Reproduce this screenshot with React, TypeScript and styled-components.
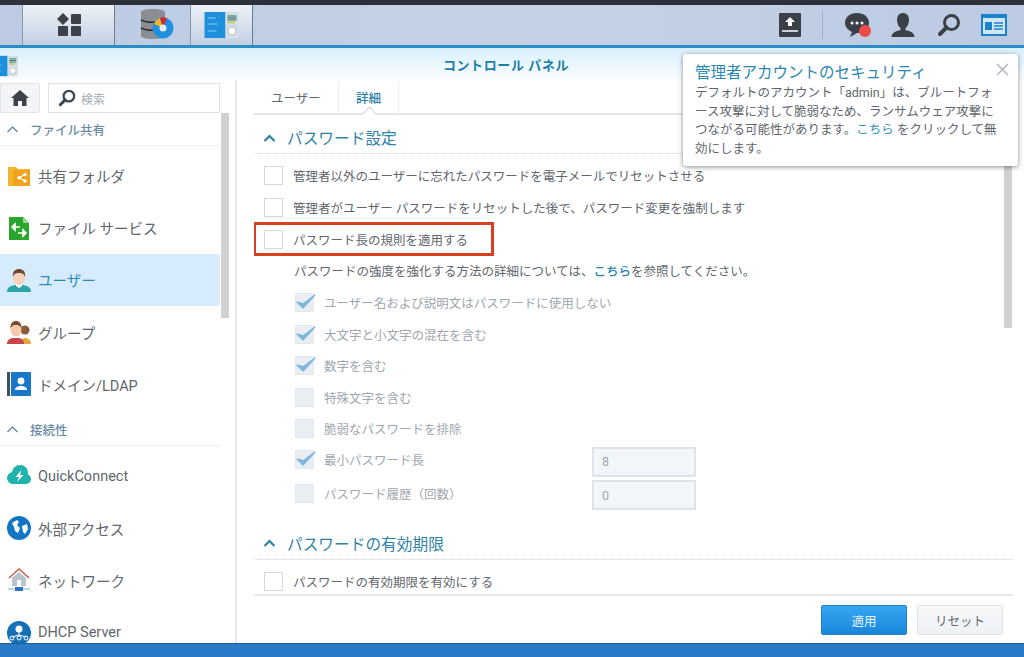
import React from "react"
import styled, { createGlobalStyle } from "styled-components"

const Global = createGlobalStyle`
  html, body { margin: 0; padding: 0; background: #fff; }
  body { font-family: Roboto, "Noto Sans CJK JP", sans-serif; color: #5f666c; }
  * { box-sizing: border-box; }
`

const Page = styled.div`
  width: 1024px;
  height: 657px;
  display: flex;
  flex-direction: column;
  overflow: hidden;
  position: relative;
`

// taskbar
const TopEdge = styled.div`
  height: 5px;
  background: #2c3038;
  flex: none;
`
const TaskBar = styled.div`
  height: 43px;
  flex: none;
  display: flex;
  align-items: stretch;
  background: linear-gradient(90deg, #bccbe3, #c5d2e6 50%, #bccbe3);
  border-bottom: 3px solid #2a8ec6;
`
const TaskButton = styled.div<{ $w: number; $active?: boolean; $pad?: number }>`
  width: ${(p) => p.$w}px;
  display: flex;
  align-items: center;
  justify-content: center;
  flex: none;
  padding-left: ${(p) => p.$pad ?? 0}px;
  ${(p) =>
    p.$active
      ? `background: linear-gradient(180deg, #eef2f7, #c3d0e4);
         border-left: 1px solid #8a97a8;
         border-right: 1px solid #6f7c8c;`
      : ""}
`
const TrayIcons = styled.div`
  margin-left: auto;
  display: flex;
  align-items: center;
  padding-right: 7px;
  height: 100%;
`
const TraySlot = styled.div<{ $w: number }>`
  width: ${(p) => p.$w}px;
  display: flex;
  justify-content: center;
  align-items: center;
`
const TrayDivider = styled.div`
  width: 1px;
  height: 28px;
  background: #a2afc2;
  margin: 0 12px 0 21px;
`

// window
const Window = styled.div`
  flex: 1;
  min-height: 0;
  display: flex;
  flex-direction: column;
  background: #fff;
`
const TitleBar = styled.div`
  height: 32px;
  flex: none;
  display: flex;
  align-items: center;
  justify-content: center;
  background: linear-gradient(180deg, #d9f0fd, #fbfdff);
  color: #1d7fa8;
  font-size: 13px;
  font-weight: 700;
  letter-spacing: 0.6px;
  position: relative;
  padding-right: 12px;
`
const TitleIcon = styled.div`
  position: absolute;
  left: -15px;
  top: 7px;
  line-height: 0;
`
const Body = styled.div`
  flex: 1;
  min-height: 0;
  display: grid;
  grid-template-columns: 237px 1fr;
  grid-template-rows: minmax(0, 1fr);
`
const BottomStrip = styled.div`
  height: 14px;
  flex: none;
  background: #2b79c9;
  border-top: 1px solid #1f5e92;
`

// sidebar
const Sidebar = styled.div`
  position: relative;
  overflow: hidden;
  border-right: 2px solid #e6e8eb;
  padding-top: 3px;
`
const SearchRow = styled.div`
  display: flex;
  gap: 8px;
  height: 30px;
  margin-right: 15px;
`
const HomeButton = styled.div`
  width: 40px;
  background: #f3f5f8;
  border: 1px solid #e1e5ea;
  border-radius: 0 3px 3px 0;
  display: flex;
  align-items: center;
  justify-content: center;
`
const SearchBox = styled.div`
  flex: 1;
  border: 1px solid #dfe3e7;
  display: flex;
  align-items: center;
  gap: 5px;
  padding-left: 9px;
  color: #a6adb3;
  font-size: 12px;
`
const GroupHeader = styled.div<{ $gap?: number }>`
  height: 33px;
  margin: ${(p) => p.$gap ?? 0}px 15px 0 0;
  display: flex;
  align-items: center;
  gap: 11px;
  padding-left: 6px;
  color: #6b8ba3;
  font-size: 12.5px;
  font-weight: 500;
  border-bottom: 1px solid #eef0f2;
`
const NavList = styled.div`
  margin: 3.5px 15px 0 0;
`
const NavItem = styled.div<{ $selected?: boolean }>`
  height: 52.2px;
  display: flex;
  align-items: center;
  gap: 7px;
  padding-left: 7px;
  font-size: 14.5px;
  border-radius: 0 3px 3px 0;
  color: ${(p) => (p.$selected ? "#2c88b8" : "#5f666c")};
  background: ${(p) => (p.$selected ? "#d6ebfb" : "transparent")};
`
const NavIconSlot = styled.span`
  width: 24px;
  height: 24px;
  flex: none;
  line-height: 0;
`
const SideThumb = styled.div`
  position: absolute;
  left: 221px;
  top: 33px;
  width: 8px;
  height: 205px;
  background: #cfd1d3;
`

// main column
const Main = styled.div`
  position: relative;
  display: flex;
  flex-direction: column;
  min-width: 0;
  min-height: 0;
`
const Tabs = styled.div`
  height: 33px;
  flex: none;
  margin: 2px 11px 0 17px;
  display: flex;
  border-bottom: 2px solid #e4e6e9;
`
const Tab = styled.div<{ $active?: boolean }>`
  width: ${(p) => (p.$active ? 60 : 85)}px;
  display: flex;
  align-items: center;
  justify-content: center;
  font-size: 12.5px;
  position: relative;
  color: ${(p) => (p.$active ? "#2c7fa6" : "#5f666c")};
  font-weight: ${(p) => (p.$active ? 500 : 400)};
  border-right: 1px solid #eceef0;
  ${(p) =>
    p.$active
      ? `&::after {
           content: "";
           position: absolute;
           left: 25px;
           bottom: -6px;
           width: 9px;
           height: 9px;
           background: #fff;
           border-left: 2px solid #e4e6e9;
           border-top: 2px solid #e4e6e9;
           transform: rotate(45deg);
         }`
      : ""}
`
const Content = styled.div`
  flex: 1;
  min-height: 0;
  overflow: hidden;
  margin: 0 11px 0 17px;
  border-bottom: 2px solid #e6e8eb;
`
const SectionHeader = styled.div<{ $gap?: number }>`
  height: 35px;
  margin-top: ${(p) => p.$gap ?? 4}px;
  display: flex;
  align-items: center;
  gap: 11px;
  padding: 3px 0 0 9px;
  color: #2f84a6;
  font-size: 15.7px;
  border-bottom: 1px dotted #d4d9dd;
`
const Row = styled.div<{ $h?: number }>`
  height: ${(p) => p.$h ?? 31.6}px;
  display: flex;
  align-items: center;
  gap: 10px;
  padding-left: 10px;
  font-size: 12.5px;
  color: #5f666c;
`
const FirstGap = styled.div`
  height: 6px;
`
const HighlightRow = styled(Row)`
  width: 241px;
  height: 34px;
  margin: -1px 0 -1px -1px;
  padding-left: 8px;
  border: 3px solid #d8401f;
`
const HintRow = styled(Row)`
  padding-left: 40px;
`
const SubRow = styled(Row)`
  padding-left: 41px;
  color: #a0a7ad;
`
const FieldRows = styled.div`
  margin-top: -2px;
`
const LabelFixed = styled.span`
  width: 258px;
  flex: none;
`
const Box = styled.span<{ $disabled?: boolean }>`
  width: 19px;
  height: 19px;
  flex: none;
  border: 1px solid ${(p) => (p.$disabled ? "#e3e9ee" : "#d6d9dc")};
  background: ${(p) => (p.$disabled ? "#e9eef3" : "#fff")};
  line-height: 0;
  position: relative;
`
const NumberField = styled.div`
  width: 104px;
  height: 30px;
  flex: none;
  margin-top: 4px;
  background: #f3f6f8;
  border: 2px solid #dfe4e8;
  display: flex;
  align-items: center;
  padding-left: 8px;
  font-size: 12.5px;
  color: #a0a7ad;
`
const Link = styled.span`
  color: #2a83ad;
  font-weight: 500;
`
const Footer = styled.div`
  height: 47px;
  flex: none;
  display: flex;
  justify-content: flex-end;
  align-items: flex-start;
  gap: 10px;
  padding: 9px 21px 0 0;
`
const Button = styled.div<{ $primary?: boolean }>`
  width: 86px;
  height: 30px;
  border-radius: 2px;
  display: flex;
  align-items: center;
  justify-content: center;
  font-size: 12.5px;
  color: ${(p) => (p.$primary ? "#e6f4ff" : "#5f6a72")};
  background: ${(p) =>
    p.$primary ? "linear-gradient(180deg,#35a6f2,#1b86d9)" : "linear-gradient(180deg,#f7f8fa,#eef1f5)"};
  border: 1px solid ${(p) => (p.$primary ? "#1f82c8" : "#dbe1e7")};
`
const MainThumb = styled.div`
  position: absolute;
  right: 12px;
  top: 33px;
  width: 8px;
  height: 215px;
  background: #cfd1d3;
`

// notification
const Popup = styled.div`
  position: absolute;
  left: 683px;
  top: 54px;
  width: 335px;
  height: 112px;
  background: #fff;
  border-radius: 3px;
  box-shadow: 0 1px 5px rgba(0, 0, 0, 0.45);
  padding: 9px 12px 8px 12px;
`
const PopupTitle = styled.div`
  color: #2b87ad;
  font-size: 15.5px;
  line-height: 20px;
  margin-bottom: 1px;
`
const PopupLine = styled.div`
  font-size: 12.5px;
  line-height: 18.5px;
  color: #5f666c;
  white-space: nowrap;
`
const PopupLink = styled(Link)`
  color: #3a90b4;
  font-weight: 400;
`
const PopupClose = styled.div`
  position: absolute;
  right: 9px;
  top: 9px;
  line-height: 0;
`

const Chevron = ({ color = "#6b8ba3", bold }: { color?: string; bold?: boolean }) => (
  <svg width="13" height="8" viewBox="0 0 13 8" fill="none">
    <path d="M1.5 7L6.5 2L11.5 7" stroke={color} strokeWidth={bold ? 2.2 : 1.4} />
  </svg>
)

const CheckMark = () => (
  <svg width="22" height="20" viewBox="0 0 22 20" style={{ position: "absolute", left: -1, top: -2 }}>
    <path d="M2 10L8 16L20 3L8.5 11.5Z" fill="#7fb6dc" stroke="#7fb6dc" strokeWidth="1.2" strokeLinejoin="round" />
  </svg>
)

const SearchGlyph = ({ size = 18, color = "#3f464d" }: { size?: number; color?: string }) => (
  <svg width={size} height={size} viewBox="0 0 24 24" fill="none">
    <circle cx="14.5" cy="9.5" r="7" stroke={color} strokeWidth="3" />
    <path d="M9.5 14.5L3 21" stroke={color} strokeWidth="4" strokeLinecap="round" />
  </svg>
)

const PanelIcon = ({ w = 35, h = 28 }: { w?: number; h?: number }) => (
  <svg width={w} height={h} viewBox="0 0 34 28">
    <rect x="0" y="1" width="21" height="26" fill="#1d8fdc" />
    <path d="M3 7h8M3 13h10M3 20h9" stroke="#8fd0f5" strokeWidth="1" />
    <rect x="21" y="1" width="13" height="26" fill="#d5dee4" />
    <path d="M23 5h9M23 9h9" stroke="#3fa184" strokeWidth="1.6" />
    <path d="M23 7h9" stroke="#444" strokeWidth="1" />
    <path d="M23 11.5h7" stroke="#e2b23a" strokeWidth="1.4" />
    <circle cx="27.5" cy="20" r="4" fill="#fff" stroke="#b3bcc4" />
  </svg>
)

const SharedIcon = () => (
  <svg width="24" height="24" viewBox="0 0 24 24">
    <path d="M1 3h8l2 2h12v17H1z" fill="#f3b52c" />
    <rect x="6" y="6" width="17" height="16" fill="#f0a41d" />
    <path d="M18 10.5l-6 3.2 6 3.3" stroke="#fff" strokeWidth="1.3" fill="none" />
    <circle cx="18" cy="10.5" r="1.7" fill="#fff" />
    <circle cx="12" cy="13.7" r="1.7" fill="#fff" />
    <circle cx="18" cy="17" r="1.7" fill="#fff" />
  </svg>
)
const FileServiceIcon = () => (
  <svg width="24" height="24" viewBox="0 0 24 24">
    <path d="M2 1h14l6 6v17H2z" fill="#2aa52e" />
    <path d="M16 1l6 6h-6z" fill="#8fd98f" />
    <path d="M5 11h8M5 11l3-3v6zM11 17h8M19 17l-3-3v6z" stroke="#fff" strokeWidth="1.6" fill="#fff" />
  </svg>
)
const UserIcon = () => (
  <svg width="24" height="24" viewBox="0 0 24 24">
    <path d="M0 24c0-5 4-6 8-7h8c4 1 8 2 8 7z" fill="#2ba3a8" />
    <path d="M9 15h6v3l-3 2-3-2z" fill="#fff" />
    <ellipse cx="12" cy="9" rx="6" ry="8" fill="#f8d3bb" />
    <path d="M6 9C5 3 9 1 12 1s7 2 6 8c-1-3-2-4-6-4S7 6 6 9z" fill="#6b4630" />
  </svg>
)
const GroupIcon = () => (
  <svg width="24" height="24" viewBox="0 0 24 24">
    <circle cx="18" cy="10" r="4.5" fill="#8a5b3c" />
    <path d="M14 24c0-4 2-6 4-6s6 1 6 6z" fill="#e5a83f" />
    <path d="M0 24c0-4 3-6 7-6h4c4 0 6 2 6 6z" fill="#c8454c" />
    <ellipse cx="9" cy="9" rx="5.5" ry="7.5" fill="#f6c9a8" />
    <path d="M3.5 9C3 3 6 1 9 1s6 2 5.5 8c-1-3-2-4-5.500-4S4.500 6 3.500 9z" fill="#7a4d30" />
  </svg>
)
const DomainIcon = () => (
  <svg width="24" height="24" viewBox="0 0 24 24">
    <rect x="0" y="0" width="3" height="24" fill="#3b5166" />
    <rect x="4" y="0" width="20" height="24" fill="#1976c9" />
    <circle cx="14" cy="9" r="3.4" fill="#fff" />
    <path d="M8 18c0-3 3-4 6-4s6 1 6 4z" fill="#fff" />
  </svg>
)
const CloudIcon = () => (
  <svg width="24" height="24" viewBox="0 0 24 24">
    <circle cx="6" cy="14" r="6" fill="#1fb3ac" />
    <circle cx="13" cy="9" r="8" fill="#1fb3ac" />
    <circle cx="19" cy="15" r="5" fill="#1fb3ac" />
    <rect x="5" y="13" width="14" height="7" fill="#1fb3ac" />
    <path d="M14.5 6l-6 7h3.500l-2 5 6.500-7h-3.500z" fill="#fff" />
  </svg>
)
const GlobeIcon = () => (
  <svg width="24" height="24" viewBox="0 0 24 24">
    <circle cx="12" cy="12" r="12" fill="#1476c2" />
    <path d="M5 7l5-3 2 2-2 3 3 3-2 5-3-2-1-4zM15 10l5-2 1 5-3 5-2-2z" fill="#fff" />
  </svg>
)
const NetworkIcon = () => (
  <svg width="24" height="24" viewBox="0 0 24 24">
    <path d="M2 10L12 1l10 9" stroke="#d0615a" strokeWidth="1.6" fill="none" />
    <path d="M5 10l7-6 7 6v8H5z" fill="#b9c5cc" />
    <rect x="10" y="12" width="4" height="6" fill="#fff" />
    <path d="M1 21h22" stroke="#9db7cb" strokeWidth="1.2" />
    <rect x="8" y="19" width="8" height="4" fill="#2a78c0" />
  </svg>
)
const DhcpIcon = () => (
  <svg width="24" height="24" viewBox="0 0 24 24">
    <circle cx="12" cy="12" r="12" fill="#1670b8" />
    <circle cx="12" cy="8" r="3.5" fill="#fff" />
    <path d="M12 11v4M5 16l7-2 7 2" stroke="#fff" strokeWidth="1" fill="none" />
    <circle cx="5" cy="17" r="2" fill="none" stroke="#fff" />
    <circle cx="12" cy="17" r="2" fill="none" stroke="#fff" />
    <circle cx="19" cy="17" r="2" fill="none" stroke="#fff" />
  </svg>
)

export default function App() {
  return (
    <Page>
      <Global />
      <TopEdge />
      <TaskBar>
        <TaskButton $w={22} />
        <TaskButton $w={93} $active>
          <svg width="24" height="24" viewBox="0 0 24 24" fill="#3c4248">
            <path d="M6 0l6 6-6 6-6-6z" />
            <rect x="14" y="1" width="10" height="10" rx="1" />
            <rect x="1" y="13" width="10" height="10" rx="1" />
            <rect x="14" y="13" width="10" height="10" rx="1" />
          </svg>
        </TaskButton>
        <TaskButton $w={75} $pad={8}>
          <svg width="34" height="32" viewBox="0 0 34 32">
            <path d="M1 3c0-4 24-4 24 0v24c0 4-24 4-24 0z" fill="#8b8f94" />
            <path d="M1 11c6 3 18 3 24 0M1 19c6 3 18 3 24 0" stroke="#2f3338" strokeWidth="1.4" fill="none" />
            <circle cx="23" cy="19" r="10.500" fill="#1f90e0" />
            <path d="M23 19L14 15a10 10 0 0 1 6-6z" fill="#eeb42c" />
            <path d="M23 19l-3-10a10 10 0 0 1 7 0z" fill="#c9302c" />
            <circle cx="23" cy="19" r="3.5" fill="#e9eef3" />
          </svg>
        </TaskButton>
        <TaskButton $w={63} $active>
          <PanelIcon />
        </TaskButton>
        <TrayIcons>
          <TraySlot $w={22}>
            <svg width="22" height="24" viewBox="0 0 22 24">
              <rect width="22" height="24" rx="1" fill="#3a4047" />
              <path d="M11 4l5 5h-3v4H9V9H6z" fill="#fff" />
              <path d="M3 18h16" stroke="#fff" strokeWidth="1.500" />
            </svg>
          </TraySlot>
          <TrayDivider />
          <TraySlot $w={45.5}>
            <svg width="26" height="25" viewBox="0 0 26 25">
              <path d="M12 0c7 0 12 4 12 10s-5 10-12 10l-7 4 2-5C3 17 0 14 0 10 0 4 5 0 12 0z" fill="#3a4047" />
              <circle cx="7" cy="10" r="1.500" fill="#fff" />
              <circle cx="12" cy="10" r="1.500" fill="#fff" />
              <circle cx="17" cy="10" r="1.500" fill="#fff" />
              <circle cx="20" cy="18" r="6" fill="#ee4a4a" />
            </svg>
          </TraySlot>
          <TraySlot $w={45.5}>
            <svg width="24" height="24" viewBox="0 0 24 24" fill="#3a4047">
              <path d="M12 0c4 0 6 3 6 7s-2 7-3.500 8v2c3 1 9 2 9 7H.5c0-5 6-6 9-7v-2C8 14 6 11 6 7s2-7 6-7z" />
            </svg>
          </TraySlot>
          <TraySlot $w={45.5}>
            <SearchGlyph size={24} color="#3a4047" />
          </TraySlot>
          <TraySlot $w={45.5}>
            <svg width="26" height="22" viewBox="0 0 26 22">
              <rect x="1" y="1" width="24" height="20" fill="#d4e6f5" stroke="#1b82cc" strokeWidth="2" />
              <path d="M1 1h24v3H1z" fill="#1b82cc" />
              <rect x="4" y="8" width="7" height="8" fill="#1b82cc" />
              <path d="M13 9h9M13 12h9M13 15h9" stroke="#1b82cc" strokeWidth="1.600" />
            </svg>
          </TraySlot>
        </TrayIcons>
      </TaskBar>
      <Window>
        <TitleBar>
          <TitleIcon>
            <PanelIcon w={39} h={22} />
          </TitleIcon>
          コントロール パネル
        </TitleBar>
        <Body>
          <Sidebar>
            <SearchRow>
              <HomeButton>
                <svg width="18" height="16" viewBox="0 0 18 16">
                  <path d="M9 0l9 8h-2.500v8H11v-5H7v5H2.500V8H0z" fill="#3c4248" />
                </svg>
              </HomeButton>
              <SearchBox>
                <SearchGlyph />
                検索
              </SearchBox>
            </SearchRow>
            <GroupHeader>
              <Chevron />
              ファイル共有
            </GroupHeader>
            <NavList>
              <NavItem>
                <NavIconSlot><SharedIcon /></NavIconSlot>共有フォルダ
              </NavItem>
              <NavItem>
                <NavIconSlot><FileServiceIcon /></NavIconSlot>ファイル サービス
              </NavItem>
              <NavItem $selected>
                <NavIconSlot><UserIcon /></NavIconSlot>ユーザー
              </NavItem>
              <NavItem>
                <NavIconSlot><GroupIcon /></NavIconSlot>グループ
              </NavItem>
              <NavItem>
                <NavIconSlot><DomainIcon /></NavIconSlot>ドメイン/LDAP
              </NavItem>
            </NavList>
            <GroupHeader $gap={3}>
              <Chevron />
              接続性
            </GroupHeader>
            <NavList>
              <NavItem>
                <NavIconSlot><CloudIcon /></NavIconSlot>QuickConnect
              </NavItem>
              <NavItem>
                <NavIconSlot><GlobeIcon /></NavIconSlot>外部アクセス
              </NavItem>
              <NavItem>
                <NavIconSlot><NetworkIcon /></NavIconSlot>ネットワーク
              </NavItem>
              <NavItem>
                <NavIconSlot><DhcpIcon /></NavIconSlot>DHCP Server
              </NavItem>
            </NavList>
            <SideThumb />
          </Sidebar>
          <Main>
            <Tabs>
              <Tab>ユーザー</Tab>
              <Tab $active>詳細</Tab>
            </Tabs>
            <Content>
              <SectionHeader>
                <Chevron color="#2f84a6" bold />
                パスワード設定
              </SectionHeader>
              <FirstGap />
              <Row>
                <Box />
                管理者以外のユーザーに忘れたパスワードを電子メールでリセットさせる
              </Row>
              <Row>
                <Box />
                管理者がユーザー パスワードをリセットした後で、パスワード変更を強制します
              </Row>
              <HighlightRow>
                <Box />
                パスワード長の規則を適用する
              </HighlightRow>
              <HintRow>
                <span>
                  パスワードの強度を強化する方法の詳細については、<Link>こちら</Link>を参照してください。
                </span>
              </HintRow>
              <SubRow>
                <Box $disabled><CheckMark /></Box>
                ユーザー名および説明文はパスワードに使用しない
              </SubRow>
              <SubRow>
                <Box $disabled><CheckMark /></Box>
                大文字と小文字の混在を含む
              </SubRow>
              <SubRow>
                <Box $disabled><CheckMark /></Box>
                数字を含む
              </SubRow>
              <SubRow>
                <Box $disabled />
                特殊文字を含む
              </SubRow>
              <SubRow>
                <Box $disabled />
                脆弱なパスワードを排除
              </SubRow>
              <FieldRows>
                <SubRow $h={33.5}>
                  <Box $disabled><CheckMark /></Box>
                  <LabelFixed>最小パスワード長</LabelFixed>
                  <NumberField>8</NumberField>
                </SubRow>
                <SubRow $h={33.5}>
                  <Box $disabled />
                  <LabelFixed>パスワード履歴（回数）</LabelFixed>
                  <NumberField>0</NumberField>
                </SubRow>
              </FieldRows>
              <SectionHeader $gap={15}>
                <Chevron color="#2f84a6" bold />
                パスワードの有効期限
              </SectionHeader>
              <FirstGap />
              <Row>
                <Box />
                パスワードの有効期限を有効にする
              </Row>
            </Content>
            <Footer>
              <Button $primary>適用</Button>
              <Button>リセット</Button>
            </Footer>
            <MainThumb />
          </Main>
        </Body>
      </Window>
      <BottomStrip />
      <Popup>
        <PopupTitle>管理者アカウントのセキュリティ</PopupTitle>
        <PopupLine>デフォルトのアカウント「admin」は、ブルートフォ</PopupLine>
        <PopupLine>ース攻撃に対して脆弱なため、ランサムウェア攻撃に</PopupLine>
        <PopupLine>
          つながる可能性があります。<PopupLink>こちら</PopupLink> をクリックして無
        </PopupLine>
        <PopupLine>効にします。</PopupLine>
        <PopupClose>
          <svg width="13" height="13" viewBox="0 0 13 13">
            <path d="M1 1l11 11M12 1L1 12" stroke="#a9b0b6" strokeWidth="1.300" />
          </svg>
        </PopupClose>
      </Popup>
    </Page>
  )
}
